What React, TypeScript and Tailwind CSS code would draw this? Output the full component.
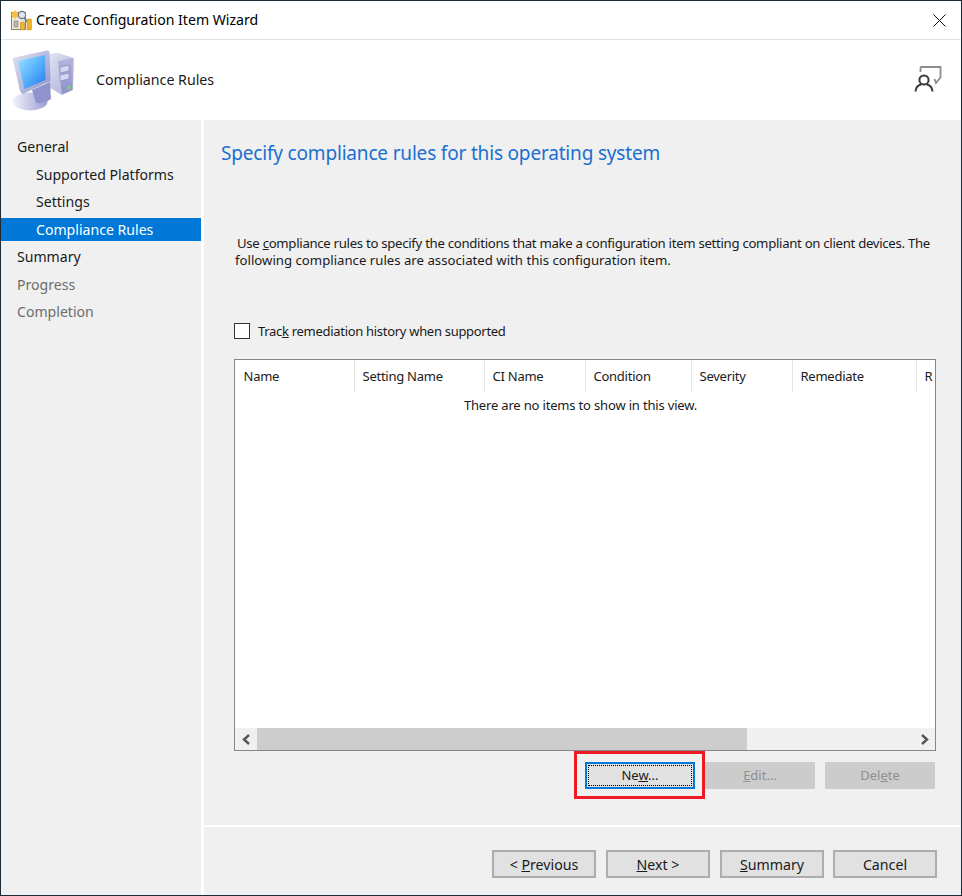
const font = { fontFamily: '"Noto Sans", "Open Sans", sans-serif' };

const columns = [
  { label: "Name", width: "w-[120px]" },
  { label: "Setting Name", width: "w-[130px]" },
  { label: "CI Name", width: "w-[101px]" },
  { label: "Condition", width: "w-[106px]" },
  { label: "Severity", width: "w-[101px]" },
  { label: "Remediate", width: "w-[124px]" },
  { label: "R", width: "w-[19px]" },
];

function WizardIcon() {
  return (
    <svg width="21" height="22" viewBox="0 0 21 22" className="shrink-0 blur-[0.3px]">
      <rect x="0.5" y="3.5" width="14" height="17" fill="#ecebe2" stroke="#85836f" />
      <rect x="3" y="12" width="4" height="6" fill="#b9b6a4" stroke="#77756a" strokeWidth="0.5" />
      <path d="M4 0.5 L5 3 L7.5 2 L6.5 4.5 L9 5.5 L6.5 6.5 L7.5 9 L5 8 L4 10.5 L3 8 L0.5 9 L1.5 6.5 L-1 5.5 L1.5 4.5 L0.5 2 L3 3 Z" fill="#f6bd3a" />
      <circle cx="11" cy="6" r="3.6" fill="#dfe6ee" stroke="#6d7a86" strokeWidth="1.2" />
      <path d="M13.5 9 L16 13" stroke="#6d7a86" strokeWidth="1.6" />
      <rect x="9.5" y="13" width="4" height="8" rx="1" fill="#f0b429" stroke="#b9831a" strokeWidth="0.5" />
      <rect x="16" y="10" width="4.5" height="11" rx="1" fill="#f0b429" stroke="#b9831a" strokeWidth="0.5" />
    </svg>
  );
}

function ComputerIcon() {
  return (
    <svg width="64" height="64" viewBox="0 0 64 64" className="shrink-0 blur-[0.5px]">
      <defs>
        <linearGradient id="screen" x1="0" y1="0" x2="1" y2="1">
          <stop offset="0" stopColor="#9fe4ff" />
          <stop offset="0.55" stopColor="#52aefb" />
          <stop offset="1" stopColor="#2a74ee" />
        </linearGradient>
        <linearGradient id="tower" x1="0" y1="0" x2="1" y2="1">
          <stop offset="0" stopColor="#e6e7f5" />
          <stop offset="1" stopColor="#a9acd8" />
        </linearGradient>
        <linearGradient id="front" x1="0" y1="0" x2="0" y2="1">
          <stop offset="0" stopColor="#b4b6df" />
          <stop offset="1" stopColor="#8e91c6" />
        </linearGradient>
        <linearGradient id="base" x1="0" y1="0" x2="1" y2="0">
          <stop offset="0" stopColor="#f2f3fb" />
          <stop offset="1" stopColor="#9a9dd0" />
        </linearGradient>
        <linearGradient id="bezel" x1="0" y1="0" x2="1" y2="1">
          <stop offset="0" stopColor="#e3e4f4" />
          <stop offset="1" stopColor="#8f92c8" />
        </linearGradient>
      </defs>
      <path d="M36 6 L46 5 L62 10 L61 42 L50 47 L33 37 L37 32 Z" fill="url(#tower)" />
      <path d="M46 13 L61 10 L60 42 L50 46 Z" fill="url(#front)" />
      <path d="M48 19 L57 17 L57 23 L48 25 Z" fill="#d5d6ef" stroke="#7c80b8" strokeWidth="0.6" />
      <path d="M48 27 L57 25 L57 31 L48 33 Z" fill="#d5d6ef" stroke="#7c80b8" strokeWidth="0.6" />
      <rect x="55.5" y="38" width="3" height="3" fill="#74d66c" />
      <ellipse cx="18" cy="53.5" rx="17.5" ry="9" fill="url(#base)" />
      <path d="M20 42 L38 34 L39 51 Q32 56 24 55 Z" fill="#8f92cb" />
      <path d="M0.5 10 L35 2.5 Q37.5 2.5 37.5 5 L38.5 33 L11 46 Q9 46 8 43 Z" fill="url(#bezel)" />
      <path d="M6 13 L33 7 L33.5 32 L12.5 41 Z" fill="url(#screen)" />
    </svg>
  );
}

function PersonIcon() {
  return (
    <svg width="28" height="28" viewBox="0 0 28 28" fill="none" className="shrink-0 blur-[0.2px]">
      <path d="M6.5 6 V2 Q6.5 1 7.5 1 H26.5 V11.5 L22 17 L20.5 13" stroke="#8c8c8c" strokeWidth="1.8" />
      <circle cx="10" cy="14" r="4.6" stroke="#3a3a3a" strokeWidth="2" />
      <path d="M1.5 25.5 Q2 19.5 7 18.5 M13 18.5 Q18 19.5 18.5 25.5" stroke="#3a3a3a" strokeWidth="2" />
    </svg>
  );
}

function NavItem({
  label,
  sub,
  active,
  muted,
}: {
  label: string;
  sub?: boolean;
  active?: boolean;
  muted?: boolean;
}) {
  return (
    <div className="h-[27.5px] flex items-center">
      <div
        className={`h-[23px] w-full flex items-center text-[14.1px] ${sub ? "pl-[35px]" : "pl-[16px]"} ${
          active ? "bg-[#0078d7] text-white" : muted ? "text-[#6d6d6d]" : "text-[#1a1a1a]"
        }`}
      >
        {label}
      </div>
    </div>
  );
}

function Btn({
  children,
  disabled,
  className = "",
}: {
  children: React.ReactNode;
  disabled?: boolean;
  className?: string;
}) {
  return (
    <div
      className={`flex items-center justify-center border-2 ${
        disabled
          ? "border-[#cccccc] bg-[#cccccc] text-[#8f8f8f]"
          : "border-[#adadad] bg-[#e1e1e1] text-[#1a1a1a]"
      } ${className}`}
    >
      <span>{children}</span>
    </div>
  );
}

export default function App() {
  return (
    <div
      style={font}
      className="w-[962px] h-[896px] overflow-hidden flex flex-col bg-white border border-[#1c2b36]"
    >
      {/* Title bar */}
      <div className="h-[38px] shrink-0 flex items-center pl-[10px] pr-[15px] bg-white border-b border-[#e3e3e3] box-content">
        <WizardIcon />
        <span className="ml-[4px] text-[14.1px] text-black">Create Configuration Item Wizard</span>
        <svg width="13" height="13" viewBox="0 0 13 13" className="ml-auto" fill="none">
          <path d="M0.5 0.5 L12.5 12.5 M12.5 0.5 L0.5 12.5" stroke="#111" strokeWidth="1" />
        </svg>
      </div>

      {/* Header */}
      <div className="h-[80px] shrink-0 flex items-center pl-[11px] pr-[19px] bg-white">
        <ComputerIcon />
        <span className="ml-[20px] text-[14.2px] text-[#1a1a1a]">Compliance Rules</span>
        <div className="ml-auto">
          <PersonIcon />
        </div>
      </div>

      <div className="flex-1 flex min-h-0">
        {/* Sidebar */}
        <div className="w-[200px] shrink-0 bg-[#f0f0f0] pt-[13px]">
          <NavItem label="General" />
          <NavItem label="Supported Platforms" sub />
          <NavItem label="Settings" sub />
          <NavItem label="Compliance Rules" sub active />
          <NavItem label="Summary" />
          <NavItem label="Progress" muted />
          <NavItem label="Completion" muted />
        </div>

        {/* Main panel */}
        <div className="flex-1 ml-[3px] bg-[#f0f0f0] flex flex-col min-w-0">
          <div className="flex-1 pl-[30px] pr-[25px] flex flex-col">
            <h1 className="-ml-[13px] mt-[19px] h-[28px] leading-[28px] text-[19px] tracking-[-0.18px] text-[#1a6fd0] font-normal whitespace-nowrap">
              Specify compliance rules for this operating system
            </h1>
            <p className="mt-[68px] text-[13.2px] leading-[17px] text-[#1a1a1a] whitespace-nowrap">
              <span className="pl-[3px] tracking-[-0.3px]">
                Use <span className="underline">c</span>ompliance rules to specify the conditions that make a configuration item setting compliant on client devices. The
              </span>
              <br />
              <span className="pl-[1px]">following compliance rules are associated with this configuration item.</span>
            </p>

            <div className="mt-[54px] h-[16px] flex items-center">
              <div className="w-[16px] h-[16px] border border-[#333333] bg-white shrink-0" />
              <span className="ml-[8px] mt-[2px] text-[13px] tracking-[-0.3px] text-[#1a1a1a]">
                Trac<span className="underline">k</span> remediation history when supported
              </span>
            </div>

            {/* List view */}
            <div className="mt-[20px] h-[392px] border border-[#82878c] bg-white flex flex-col overflow-hidden">
              <div className="h-[32px] shrink-0 flex">
                {columns.map((c) => (
                  <div
                    key={c.label}
                    className={`${c.width} shrink-0 pl-[7.5px] first:pl-[8.5px] pt-[2px] flex items-center border-r border-[#e5e5e5] last:border-r-0 overflow-hidden text-[13px] tracking-[-0.25px] text-[#1a1a1a]`}
                  >
                    {c.label}
                  </div>
                ))}
              </div>
              <div className="h-[26px] pt-[2px] pr-[9px] flex items-center justify-center text-[13px] tracking-[-0.17px] text-[#1a1a1a]">
                There are no items to show in this view.
              </div>
              <div className="flex-1" />
              {/* Horizontal scrollbar */}
              <div className="h-[22px] shrink-0 flex items-center bg-[#f0f0f0]">
                <div className="w-[22px] flex justify-center">
                  <svg width="9" height="11" viewBox="0 0 9 11" fill="none">
                    <path d="M7 1 L2 5.5 L7 10" stroke="#555" strokeWidth="2.4" />
                  </svg>
                </div>
                <div className="w-[490px] h-full bg-[#cdcdcd]" />
                <div className="ml-auto w-[22px] flex justify-center">
                  <svg width="9" height="11" viewBox="0 0 9 11" fill="none">
                    <path d="M2 1 L7 5.5 L2 10" stroke="#555" strokeWidth="2.4" />
                  </svg>
                </div>
              </div>
            </div>

            {/* Rule actions */}
            <div className="mt-[11px] flex justify-end gap-[10px] pr-[1px]">
              <div className="relative">
                <div className="w-[110px] h-[27px] border-2 border-[#0078d7] bg-[#e1e1e1] flex items-center justify-center text-[13px] text-[#1a1a1a] p-px">
                  <div className="w-full h-full border border-dotted border-black flex items-center justify-center">
                    <span>
                      Ne<span className="underline">w</span>...
                    </span>
                  </div>
                </div>
                <div className="absolute left-[-11px] top-[-11px] w-[131px] h-[48px] border-[3px] border-[#ed1c24]" />
              </div>
              <Btn disabled className="w-[110px] h-[27px] text-[13px]">
                <span className="underline">E</span>dit...
              </Btn>
              <Btn disabled className="w-[110px] h-[27px] text-[13px]">
                Del<span className="underline">e</span>te
              </Btn>
            </div>
          </div>

          {/* Footer */}
          <div className="h-[70px] shrink-0 border-t-2 border-white flex justify-end items-start gap-[10px] pt-[23px] pr-[24px]">
            <Btn className="w-[104px] h-[28px] pt-[2px] text-[14.2px]">
              &lt; <span className="underline">P</span>revious
            </Btn>
            <Btn className="w-[104px] h-[28px] pt-[2px] text-[14.2px]">
              <span className="underline">N</span>ext &gt;
            </Btn>
            <Btn className="w-[104px] h-[28px] pt-[2px] text-[14.2px]">
              <span className="underline">S</span>ummary
            </Btn>
            <Btn className="w-[104px] h-[28px] pt-[2px] text-[14.2px] -ml-px">Cancel</Btn>
          </div>
        </div>
      </div>
    </div>
  );
}
